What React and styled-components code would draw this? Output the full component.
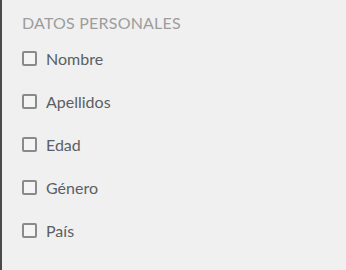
import React from "react";
import styled, { createGlobalStyle } from "styled-components";

const Global = createGlobalStyle`
  html, body { margin: 0; padding: 0; background: #f0f0f0; }
  body { font-family: Lato, "Open Sans", sans-serif; }
`;

const Panel = styled.div`
  box-sizing: border-box;
  width: 346px;
  height: 270px;
  background: #f0f0f0;
  border-left: 2px solid #4a4a4a;
  padding: 13px 0 0 20px;
  display: flex;
  flex-direction: column;
`;

const Title = styled.div`
  font-size: 16px;
  color: #9d9d9d;
  letter-spacing: 0.2px;
  line-height: 20px;
  margin-bottom: 15px;
`;

const List = styled.div`
  display: flex;
  flex-direction: column;
  gap: 23px;
`;

const Row = styled.label`
  display: flex;
  align-items: center;
  gap: 9px;
  height: 20px;
  font-size: 16px;
  color: #5a5f63;
  cursor: pointer;
`;

const Box = styled.span`
  box-sizing: border-box;
  width: 15px;
  height: 15px;
  border: 2px solid #8a8a8a;
  border-radius: 2px;
  background: #f4f4f4;
  flex: none;
`;

const items = ["Nombre", "Apellidos", "Edad", "Género", "País"];

export default function App() {
  return (
    <>
      <Global />
      <Panel>
        <Title>DATOS PERSONALES</Title>
        <List>
          {items.map((t) => (
            <Row key={t}>
              <Box />
              {t}
            </Row>
          ))}
        </List>
      </Panel>
    </>
  );
}
